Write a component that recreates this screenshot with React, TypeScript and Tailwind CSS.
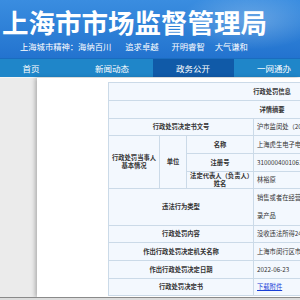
import React from 'react'

const navItems = ['首页', '新闻动态', '政务公开', '一网通办']

const cellBase = 'border border-[#cbdae8] bg-[#f3f8fe] text-[#333]'
const label = `${cellBase} text-center font-bold px-[2px]`
const value = `${cellBase} text-left pl-[3px] whitespace-nowrap overflow-hidden`

const App: React.FC = () => {
  return (
    <div
      className="w-[300px] h-[300px] overflow-hidden bg-[#ebebeb] flex flex-col"
      style={{ fontFamily: '"Noto Sans CJK SC", "Noto Sans", sans-serif' }}
    >
      {/* header banner */}
      <div className="h-[58px] shrink-0 bg-[linear-gradient(180deg,#3a8de0_0%,#2d7fd6_55%,#2373cf_100%)] relative overflow-hidden">
        <div className="absolute right-[-20px] top-[-10px] w-[140px] h-[60px] rounded-full bg-[radial-gradient(ellipse_at_center,rgba(255,255,255,0.25),rgba(255,255,255,0)_70%)]" />
        <div className="relative pl-[2px] pt-[6px] text-white font-bold text-[26.5px] leading-[32px] tracking-[0px] whitespace-nowrap">
          上海市市场监督管理局
        </div>
        <div className="relative flex pl-[20px] mt-[3px] text-white text-[8.3px] leading-[10px] whitespace-nowrap">
          <span>上海城市精神：海纳百川</span>
          <span className="ml-[14px]">追求卓越</span>
          <span className="ml-[13px]">开明睿智</span>
          <span className="ml-[10px]">大气谦和</span>
        </div>
      </div>

      {/* nav */}
      <div className="h-[19px] shrink-0 bg-[#1f86c9] border-t border-[#1a6cbf] flex ml-[-9.5px]">
        {navItems.map((item) => (
          <div
            key={item}
            className={`w-[81px] shrink-0 flex items-center justify-center text-white text-[8.5px] ${
              item === '政务公开' ? 'bg-[#105aa8]' : ''
            }`}
          >
            {item}
          </div>
        ))}
      </div>
      <div className="h-[1px] shrink-0 bg-[#f4f4f4]" />

      {/* body */}
      <div className="flex-1 flex min-h-0">
        <div className="w-[37px] shrink-0 bg-[#ebebeb]" />
        <div className="flex-1 bg-white shadow-[-2px_0_4px_rgba(0,0,0,0.25)] pl-[71px] pt-[4px] overflow-hidden">
          <table className="table-fixed border-collapse w-[327px] text-[6.3px] leading-[8px]">
            <colgroup>
              <col className="w-[51px]" />
              <col className="w-[27px]" />
              <col className="w-[67px]" />
              <col className="w-[182px]" />
            </colgroup>
            <tbody>
              <tr className="h-[18px]">
                <td colSpan={4} className={label}>行政处罚信息</td>
              </tr>
              <tr className="h-[18px]">
                <td colSpan={4} className={label}>详情摘要</td>
              </tr>
              <tr className="h-[17px]">
                <td colSpan={3} className={label}>行政处罚决定书文号</td>
                <td className={value}>沪市监闵处（2022）122022001234号</td>
              </tr>
              <tr className="h-[18px]">
                <td rowSpan={3} className={label}>行政处罚当事人基本情况</td>
                <td rowSpan={3} className={label}>单位</td>
                <td className={label}>名称</td>
                <td className={value}>上海虎生电子电器有限公司</td>
              </tr>
              <tr className="h-[18px]">
                <td className={label}>注册号</td>
                <td className={value}>310000400106164</td>
              </tr>
              <tr className="h-[17px]">
                <td className={label}>法定代表人（负责人）姓名</td>
                <td className={value}>林裕原</td>
              </tr>
              <tr className="h-[35px]">
                <td colSpan={3} className={label}>违法行为类型</td>
                <td className={`${value} leading-[18px]`}>
                  销售或者在经营活动中使用未经认证的强制性产品认证目
                  <br />
                  录产品
                </td>
              </tr>
              <tr className="h-[17px]">
                <td colSpan={3} className={label}>行政处罚内容</td>
                <td className={value}>没收违法所得24.00元，罚款</td>
              </tr>
              <tr className="h-[18px]">
                <td colSpan={3} className={label}>作出行政处罚决定机关名称</td>
                <td className={value}>上海市闵行区市场监督管理局</td>
              </tr>
              <tr className="h-[18px]">
                <td colSpan={3} className={label}>作出行政处罚决定日期</td>
                <td className={value}>2022-06-23</td>
              </tr>
              <tr className="h-[17px]">
                <td colSpan={3} className={label}>行政处罚决定书</td>
                <td className={value}>
                  <span className="text-[#1a3fd6] underline">下载附件</span>
                </td>
              </tr>
            </tbody>
          </table>
        </div>
      </div>

      {/* bottom bar */}
      <div className="h-[3px] shrink-0 bg-[#dcdcdc] border-t border-[#8a8a8a]" />
    </div>
  )
}

export default App
